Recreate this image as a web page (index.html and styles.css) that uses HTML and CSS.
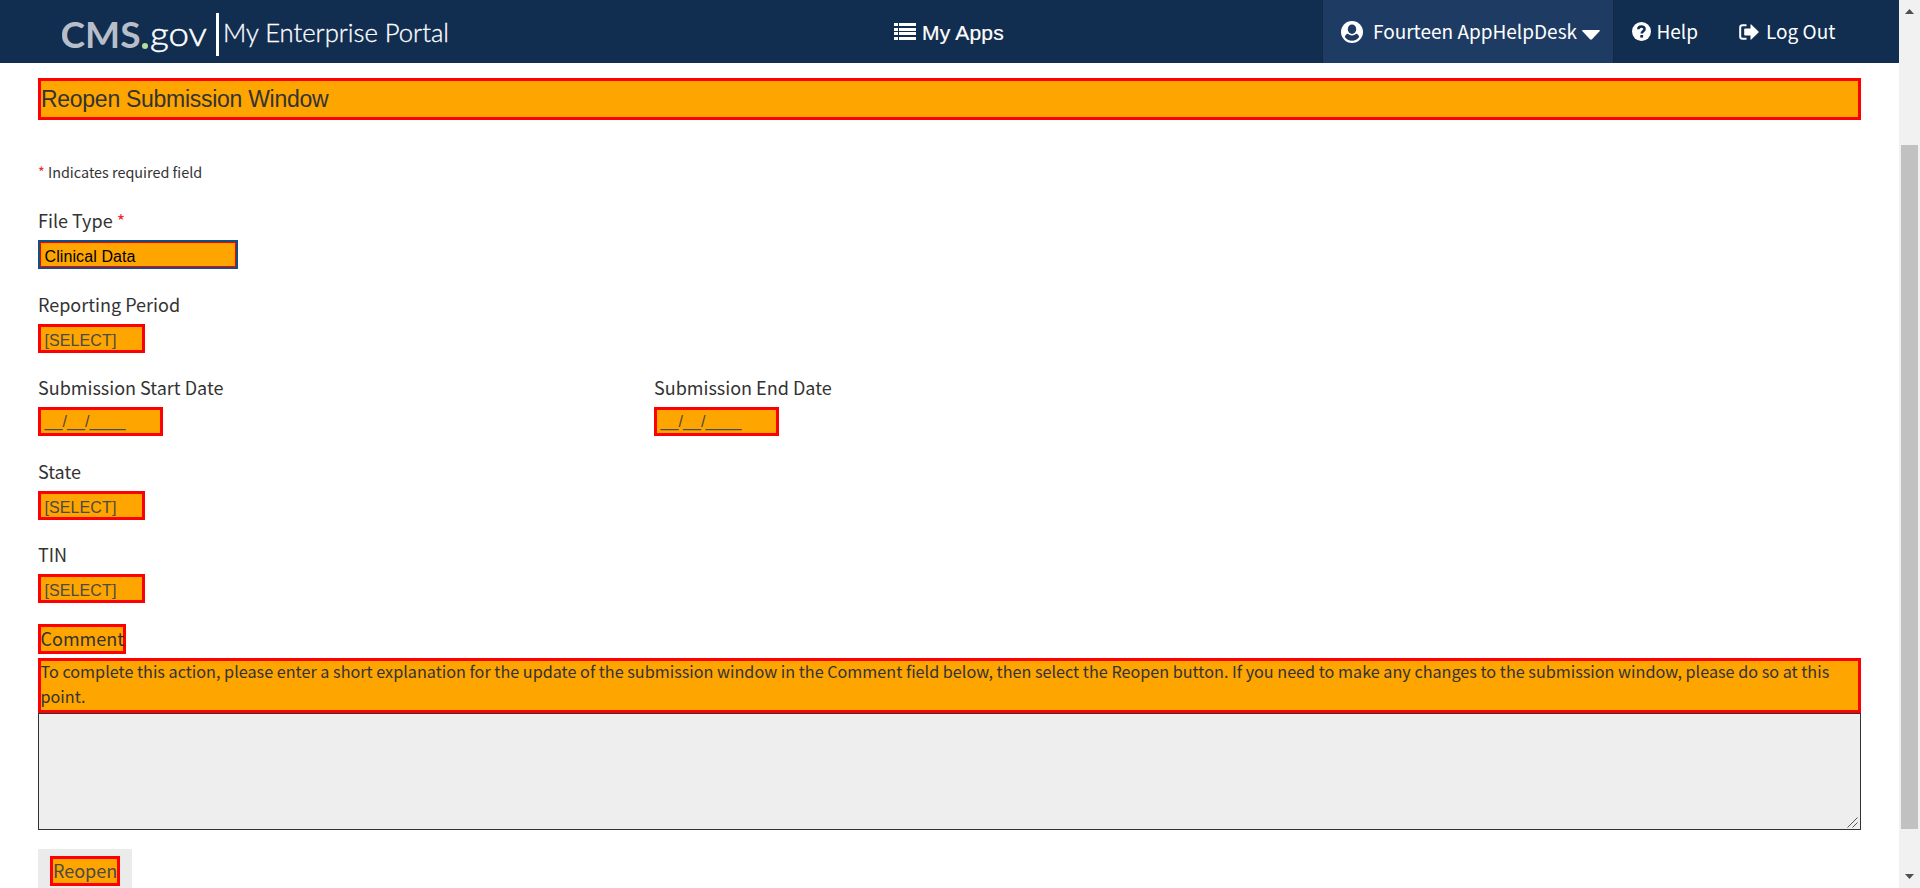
FILE: index.html
```html
<!DOCTYPE html>
<html lang="en">
<head>
<meta charset="utf-8">
<title>My Enterprise Portal</title>
<link rel="stylesheet" href="styles.css">
</head>
<body>
<div class="window">
  <div class="page">
    <header class="header">
      <svg class="logo" width="390" height="63" viewBox="62 0 390 63">
        <text class="logo-cms" x="60.5" y="48" textLength="80" lengthAdjust="spacingAndGlyphs">CMS</text>
        <circle cx="145" cy="46" r="3" fill="#b5dc9c"/>
        <text class="logo-gov" x="150" y="46" textLength="57" lengthAdjust="spacingAndGlyphs">gov</text>
        <rect x="216" y="13" width="3" height="43" fill="#fff"/>
        <text class="logo-name" x="223" y="42" textLength="226" lengthAdjust="spacingAndGlyphs">My Enterprise Portal</text>
      </svg>
      <a class="apps">
        <svg width="22" height="17" viewBox="0 0 22 17" fill="#fff"><path d="M0 0h4v3H0zM5 0h17v3H5zM0 5h4v3H0zM5 5h17v3H5zM0 9h4v3H0zM5 9h17v3H5zM0 14h4v3H0zM5 14h17v3H5z"/></svg>
        <span>My Apps</span>
      </a>
      <div class="user">
        <svg width="22" height="22" viewBox="0 0 22 22"><circle cx="11" cy="11" r="11" fill="#fff"/><ellipse cx="11" cy="8.200" rx="4.200" ry="4.800" fill="#1e3c63"/><path d="M3.800 16c.4-2.200 1.500-3 3.200-3.300 2.300 2.300 5.700 2.300 8 0 1.700.3 2.800 1.100 3.200 3.300-1.600 2.400-4.100 3.700-7.200 3.700S5.400 18.400 3.800 16z" fill="#1e3c63"/></svg>
        <span>Fourteen AppHelpDesk</span>
        <svg class="caret" width="18" height="10" viewBox="0 0 18 10"><path d="M.8 0h16.400q1.200.3.300 1.300L10 9.300q-1 .9-2 0L.5 1.300Q-.4.3.8 0z" fill="#fff"/></svg>
      </div>
      <a class="help">
        <svg width="19" height="19" viewBox="0 0 19 19"><circle cx="9.500" cy="9.500" r="9.500" fill="#fff"/><path d="M6.300 7.200C6.300 3.700 12.600 3.600 12.600 7c0 2.200-2.900 2.200-2.900 4.400" fill="none" stroke="#112e51" stroke-width="2.500"/><rect x="8.300" y="13" width="2.800" height="2.600" fill="#112e51"/></svg>
        <span>Help</span>
      </a>
      <a class="logout">
        <svg width="20" height="16" viewBox="0 0 20 16"><path d="M7.500 1.200H3.500Q1.200 1.200 1.200 3.500v9q0 2.300 2.300 2.300h4" fill="none" stroke="#fff" stroke-width="2"/><path d="M6 4.500h5.500V.8q0-.8.8-.4l7.200 7q.5.600 0 1.200l-7.200 7q-.8.400-.8-.4v-3.700H6q-.8 0-.8-.8V5.300q0-.8.800-.8z" fill="#fff"/></svg>
        <span>Log Out</span>
      </a>
    </header>
    <main class="content">
      <h1 class="title">Reopen Submission Window</h1>
      <p class="required"><span class="star">*</span> Indicates required field</p>
      <div class="row tall"><div class="field"><label>File Type <span class="star">*</span></label><div class="input file">Clinical Data</div></div></div>
      <div class="row"><div class="field"><label>Reporting Period</label><div class="input select">[SELECT]</div></div></div>
      <div class="row tall">
        <div class="field start"><label>Submission Start Date</label><div class="input date">__/__/____</div></div>
        <div class="field"><label>Submission End Date</label><div class="input date">__/__/____</div></div>
      </div>
      <div class="row"><div class="field"><label>State</label><div class="input select">[SELECT]</div></div></div>
      <div class="row tall"><div class="field"><label>TIN</label><div class="input select">[SELECT]</div></div></div>
      <div class="comment-label">Comment</div>
      <p class="instructions"><span class="line">To complete this action, please enter a short explanation for the update of the submission window in the Comment field below, then select the Reopen button. If you need to make any changes to the submission window, please do so at this</span> <span class="line">point.</span></p>
      <div class="textarea"><svg width="11" height="11" viewBox="0 0 11 11"><path d="M.5 10.500l10-10M5.500 10.500l5-5" stroke="#555" fill="none"/></svg></div>
      <div class="button"><span>Reopen</span></div>
    </main>
  </div>
  <div class="scrollbar">
    <svg width="9" height="5" viewBox="0 0 9 5"><path d="M0 5l4.500-5L9 5z" fill="#505050"/></svg>
    <div class="thumb"></div>
    <svg width="9" height="5" viewBox="0 0 9 5"><path d="M0 0l4.500 5L9 0z" fill="#505050"/></svg>
  </div>
</div>
</body>
</html>
```
FILE: styles.css
```css
* { box-sizing: border-box; }
body {
  margin: 0;
  height: 888px;
  overflow: hidden;
  background: #fff;
  color: #333;
  font-family: "Noto Sans CJK JP", "Noto Sans CJK SC", sans-serif;
}
svg { display: block; flex: none; }
.window { display: flex; height: 888px; }
.page { width: 1899px; flex: none; overflow: hidden; }

.header {
  display: flex;
  height: 63px;
  padding-left: 62px;
  background: #112e51;
  color: #fff;
  font-size: 19px;
  line-height: 28px;
  white-space: nowrap;
}
.logo-cms { font: bold 37px Lato, sans-serif; fill: #b7bec9; }
.logo-gov { font: 300 34px Lato, sans-serif; fill: #fff; stroke: #fff; stroke-width: .5px; }
.logo-name { font: 300 24.500px Lato, sans-serif; fill: #fff; stroke: #fff; stroke-width: .3px; }
.apps {
  display: flex;
  width: 870px;
  padding: 23px 0 0 442px;
  gap: 6px;
  font-family: "Liberation Sans", Arial, sans-serif;
  font-size: 21px;
  letter-spacing: .2px;
  line-height: 20px;
  -webkit-text-stroke: .2px #fff;
}
.user {
  display: flex;
  width: 292px;
  padding: 21px 0 0 18px;
  background: #1e3c63;
  border: solid #152941;
  border-width: 0 1px;
}
.user span { margin: -4px 0 0 10px; width: 209px; }
.caret { margin-top: 9px; }
.help { display: flex; width: 107px; padding: 22px 0 0 18px; }
.help span { margin: -5px 0 0 5.500px; }
.logout { display: flex; padding: 24px 0 0 18px; }
.logout span { margin: -7px 0 0 7px; }

.content { padding: 15px 38px 0; }
.title {
  height: 42px;
  margin: 0;
  border: 3px solid #f00;
  background: #ffa500;
  font: 23px/36px "Liberation Sans", Arial, sans-serif;
  letter-spacing: -.28px;
}
.required { margin: 40px 0 0; height: 46px; font-size: 14.400px; line-height: 24px; }
.star { color: #f02a2a; }
.row { display: flex; height: 83px; }
.row.tall { height: 84px; }
.field { display: flex; flex-direction: column; gap: 6px; }
.field.start { width: 616px; }
label { font-size: 18px; line-height: 28px; white-space: nowrap; }
.input {
  height: 29px;
  padding: 4px 0 0 3.500px;
  border: 3px solid #f00;
  background: #ffa500;
  color: #4a4a4a;
  font: 16px/19px "Liberation Sans", Arial, sans-serif;
  letter-spacing: .1px;
}
.file {
  width: 200px;
  border: 2px solid #114f85;
  box-shadow: inset 0 0 0 1px #f00;
  padding: 5px 0 0 4.500px;
  color: #000;
}
.select { width: 107px; }
.date { width: 125px; padding-top: 2px; }
.comment-label {
  width: 88px;
  height: 30px;
  border: 3px solid #f00;
  background: #ffa500;
  font-size: 18px;
  line-height: 23px;
  white-space: nowrap;
  text-indent: -.5px;
}
.instructions {
  height: 55px;
  margin: 4px 0 0;
  border: 3px solid #f00;
  background: #ffa500;
  font-size: 16.200px;
  line-height: 25px;
  text-indent: -.5px;
}
.line { display: block; height: 25px; margin-top: -2px; white-space: nowrap; }
.line + .line { margin-top: 0; }
.textarea {
  display: flex;
  justify-content: flex-end;
  align-items: flex-end;
  height: 117px;
  padding: 1px 2px;
  border: 1px solid #323232;
  background: #eee;
}
.button {
  width: 94px;
  height: 50px;
  margin-top: 19px;
  padding: 7px 12px;
  background: #ebebeb;
}
.button span {
  display: block;
  height: 30px;
  border: 3px solid #f00;
  background: #ffa500;
  color: #4a4a4a;
  font-size: 18px;
  line-height: 23px;
}
.scrollbar {
  display: flex;
  flex-direction: column;
  align-items: center;
  width: 21px;
  padding: 9px 0;
  background: #f1f1f1;
}
.thumb { width: 17px; height: 684px; margin: 131px 0 45px; background: #c1c1c1; }
```
